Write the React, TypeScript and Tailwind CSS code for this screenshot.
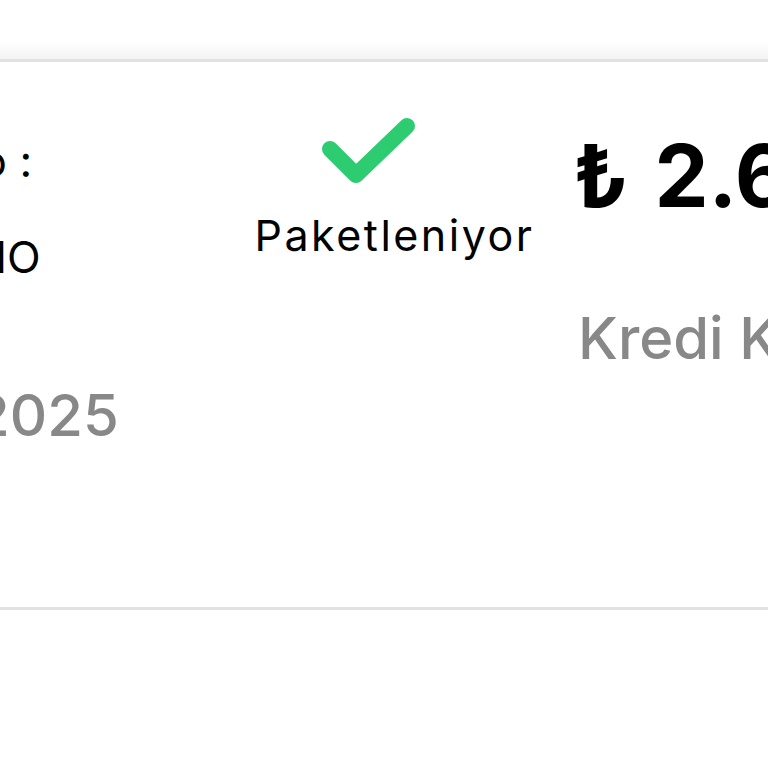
import React from "react"

const FONT = { fontFamily: 'Inter, "Noto Sans", "Liberation Sans", sans-serif' }

function CheckIcon() {
  return (
    <svg width="100" height="75" viewBox="0 0 100 75" className="block">
      <polyline
        points="9,33 35,59 86,10"
        fill="none"
        stroke="#2ecc71"
        strokeWidth="16"
        strokeLinecap="round"
        strokeLinejoin="round"
      />
    </svg>
  )
}

export default function App() {
  return (
    <div className="w-[768px] h-[768px] overflow-hidden bg-white" style={FONT}>
      {/* page strip above card */}
      <div className="h-[59px] bg-gradient-to-b from-white from-70% to-[#f3f3f3]" />

      {/* order card */}
      <div className="h-[551px] bg-white border-y-[3px] border-[#e2e2e2] overflow-hidden">
        <div className="flex">
          {/* order info */}
          <div className="w-[380px] shrink-0 -ml-[137px] flex flex-col items-start text-black whitespace-nowrap">
            <p className="mt-[77px] -ml-[70px] text-[44px] leading-none">Sipariş No :</p>
            <p className="mt-[52px] ml-[11px] text-[44px] leading-none">STUDIO</p>
            <p className="mt-[107px] -ml-[55px] text-[58px] leading-none font-medium text-[#888888]">12.03.2025</p>
          </div>

          {/* status */}
          <div className="w-[300px] shrink-0 flex flex-col items-center">
            <div className="mt-[54px] -ml-[44px]">
              <CheckIcon />
            </div>
            <p className="mt-[23px] pl-[3px] text-[43px] leading-none tracking-[2.5px] text-black whitespace-nowrap">
              Paketleniyor
            </p>
          </div>

          {/* total */}
          <div className="ml-[30px] shrink-0 flex flex-col items-start whitespace-nowrap">
            <p className="mt-[71px] text-[86px] leading-none font-bold text-black">
              <span className="mr-[26px]">₺</span>2.649,90
            </p>
            <p className="mt-[90px] ml-[5px] text-[58px] leading-none font-medium text-[#888888]">Kredi Kartı</p>
          </div>
        </div>
      </div>
    </div>
  )
}
